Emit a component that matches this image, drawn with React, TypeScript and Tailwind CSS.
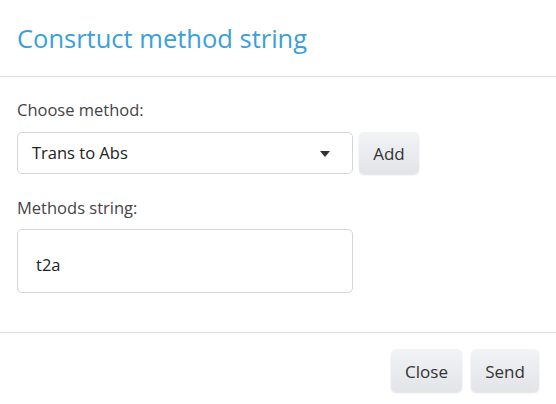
import React, { useState } from 'react';

const font = { fontFamily: '"Open Sans", "Liberation Sans", sans-serif' };

export default function App() {
  const [method, setMethod] = useState('t2a');
  const [value] = useState('t2a');

  return (
    <div className="w-[556px] h-[404px] bg-white text-[#333]" style={font}>
      {/* header */}
      <div className="h-[77px] border-b border-[#dee2e6] px-[17px] flex items-center">
        <h2 className="text-[25.5px] leading-none text-[#3a9fdb] pt-[2px]">Consrtuct method string</h2>
      </div>

      {/* body */}
      <div className="h-[256px] border-b border-[#dee2e6] px-[17px] pt-[22px]">
        <label className="block text-[16.5px] leading-[22px] text-[#444]">Choose method:</label>
        <div className="mt-[11px] flex items-center gap-[6px]">
          <div className="relative w-[336px] h-[42px] rounded-[5px] border border-[#d3d6da] bg-white flex items-center pl-[14px]">
            <span className="text-[16.5px] text-[#222]">
              {method === 't2a' ? 'Trans to Abs' : method}
            </span>
            <svg className="absolute right-[22px] top-[18px]" width="10" height="6" viewBox="0 0 10 6">
              <path d="M0 0h10L5 6z" fill="#333" />
            </svg>
          </div>
          <button
            onClick={() => setMethod('t2a')}
            className="w-[60px] h-[42px] pt-[2px] rounded-[5px] bg-gradient-to-b from-[#f2f3f5] to-[#e2e4e8] shadow-[0_1px_2px_rgba(0,0,0,0.12)] text-[17px] text-[#333]"
          >
            Add
          </button>
        </div>

        <label className="block mt-[23px] text-[16.5px] leading-[22px] text-[#444]">Methods string:</label>
        <div className="mt-[10px] w-[336px] h-[64px] rounded-[5px] border border-[#d3d6da] px-[18px] pt-[23px]">
          <span className="text-[16.5px] text-[#222]">{value}</span>
        </div>
      </div>

      {/* footer */}
      <div className="flex justify-end gap-[9px] pr-[17px] pt-[16px]">
        <button className="w-[71px] h-[43px] pt-[3px] rounded-[5px] bg-gradient-to-b from-[#f2f3f5] to-[#e2e4e8] shadow-[0_1px_2px_rgba(0,0,0,0.12)] text-[17px] text-[#333]">
          Close
        </button>
        <button className="w-[68px] h-[43px] pt-[3px] rounded-[5px] bg-gradient-to-b from-[#f2f3f5] to-[#e2e4e8] shadow-[0_1px_2px_rgba(0,0,0,0.12)] text-[17px] text-[#333]">
          Send
        </button>
      </div>
    </div>
  );
}
